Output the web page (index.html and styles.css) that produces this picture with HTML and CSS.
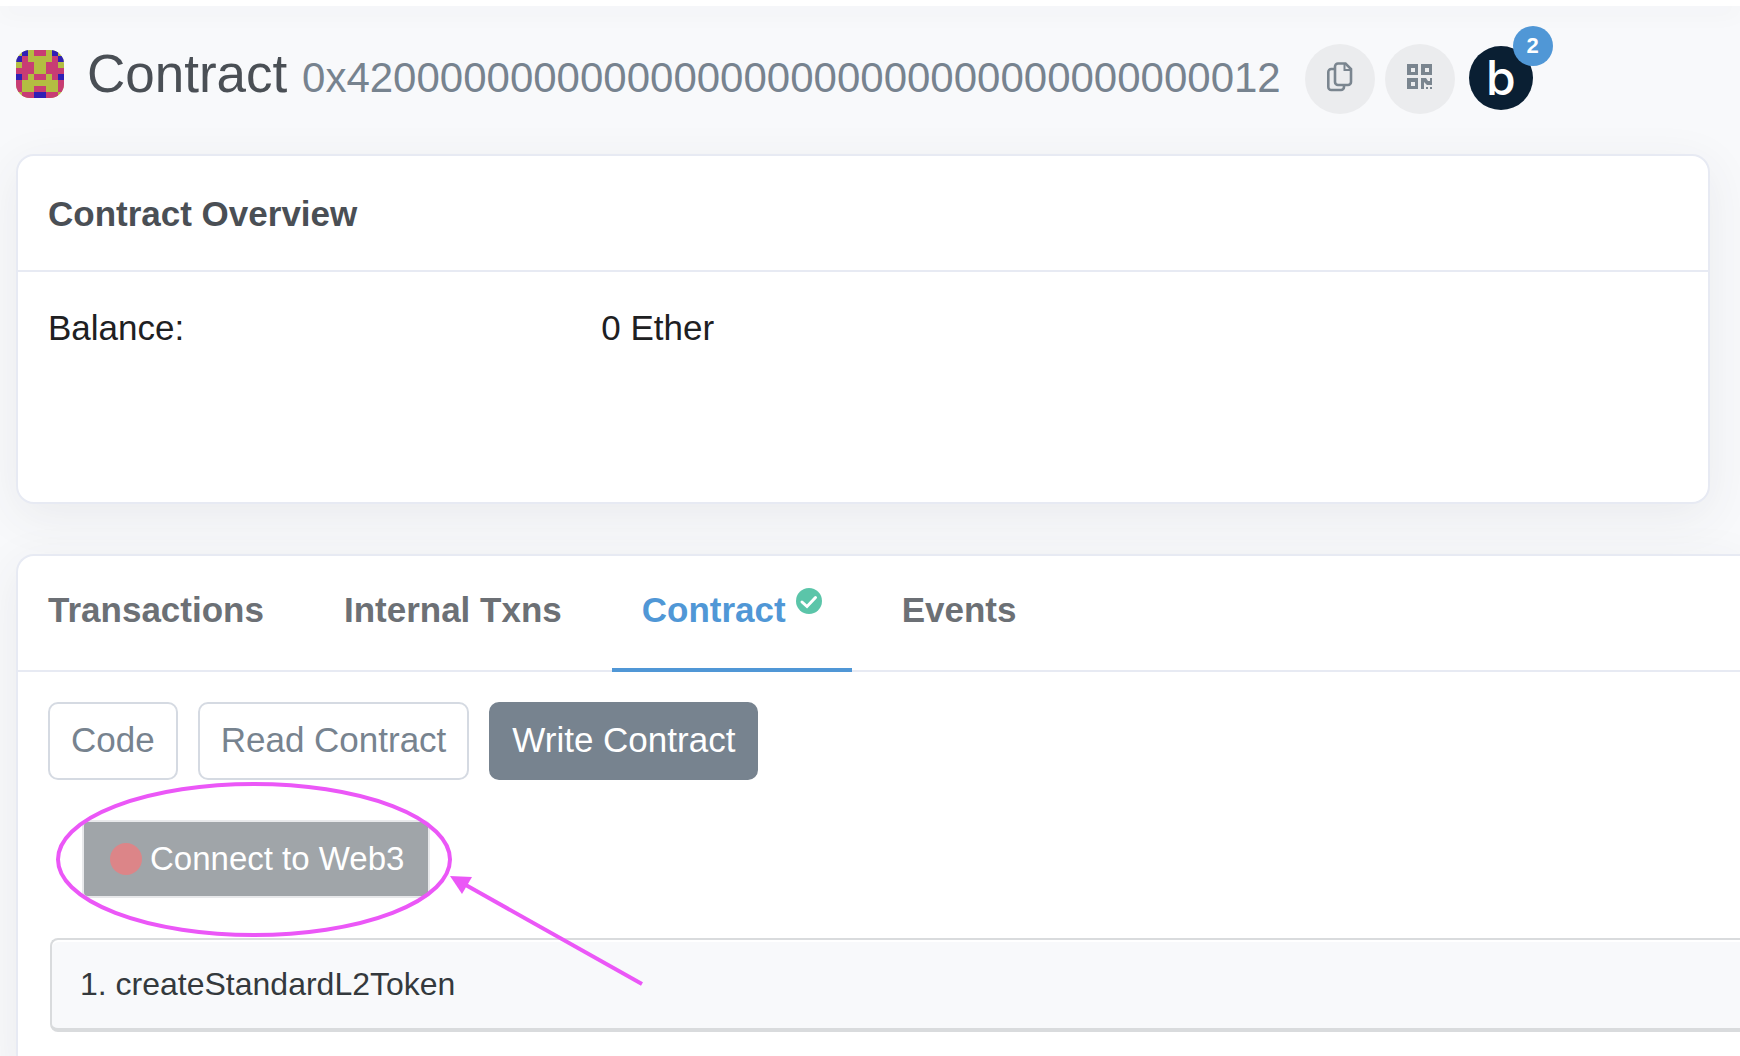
FILE: index.html
```html
<!DOCTYPE html>
<html lang="en">
<head>
<meta charset="utf-8">
<title>Contract</title>
<link rel="stylesheet" href="styles.css">
</head>
<body>
<div class="topbar"></div>
<main class="page">
  <header class="title">
    <svg class="identicon" viewBox="0 0 8 8" shape-rendering="crispEdges" aria-hidden="true">
      <rect width="8" height="8" fill="#b3bd42"/>
      <path fill="#c83c74" d="M3 0h2v1H3zM1 1h1v1H1zM6 1h1v1H6zM1 2h2v1H1zM5 2h2v1H5zM0 3h3v1H0zM5 3h3v1H5zM1 4h1v1H1zM3 4h2v1H3zM6 4h1v1H6zM0 5h1v2H0zM7 5h1v2H7zM3 6h2v1H3zM1 7h6v1H1z"/>
      <path fill="#2f1fb5" d="M1 0h1v1H1zM6 0h1v1H6zM0 1h1v1H0zM7 1h1v1H7zM0 4h1v1H0zM7 4h1v1H7zM3 7h2v1H3z"/>
    </svg>
    <h1 class="heading">Contract <span class="address">0x4200000000000000000000000000000000000012</span></h1>
    <div class="actions">
      <button class="round" type="button" aria-label="Copy address">
        <svg width="26" height="30" viewBox="0 0 26 30" fill="none" stroke="#7a858f" stroke-width="2.6">
          <path d="M8 7H4.300a3 3 0 0 0-3 3v15a3 3 0 0 0 3 3H14a3 3 0 0 0 3-3v-2"/>
          <path d="M11 1.500h7.500l5.500 5.500V20a3 3 0 0 1-3 3H11a3 3 0 0 1-3-3V4.500a3 3 0 0 1 3-3z"/>
          <path d="M17.500 1.500V8H24" stroke-width="2"/>
        </svg>
      </button>
      <button class="round" type="button" aria-label="Show QR code">
        <svg width="26" height="26" viewBox="0 0 26 26" fill="#7a858f">
          <path fill-rule="evenodd" d="M0 0h11v11H0zM4 4v4h4V4zM14 0h11v11H14zM18 4v4h4V4zM0 14h11v11H0zM4 18v4h4v-4z"/>
          <path d="M14 14h5l2 3h2v-3h2v7h-5l-3-3v7h-3zM19 23h2v2h-2zM23 23h2v2h-2z"/>
        </svg>
      </button>
      <a class="logo" href="#" aria-label="Blockscan, 2 messages"><span class="logo-letter">b</span><span class="badge">2</span></a>
    </div>
  </header>

  <section class="card overview">
    <h2 class="card-title">Contract Overview</h2>
    <dl class="facts"><dt>Balance:</dt><dd>0 Ether</dd></dl>
  </section>

  <section class="card panel">
    <nav class="tabs">
      <a class="tab" href="#">Transactions</a>
      <a class="tab" href="#">Internal Txns</a>
      <a class="tab active" href="#">Contract
        <svg class="check" width="26" height="26" viewBox="0 0 26 26" aria-hidden="true"><circle cx="13" cy="13" r="13" fill="#5bc5a9"/><path d="M6 14l5 4.500 8.500-9" fill="none" stroke="#fff" stroke-width="3" stroke-linecap="round"/></svg>
      </a>
      <a class="tab" href="#">Events</a>
    </nav>
    <div class="panel-body">
      <div class="modes">
        <button class="mode" type="button">Code</button>
        <button class="mode" type="button">Read Contract</button>
        <button class="mode selected" type="button">Write Contract</button>
      </div>
      <button class="connect" type="button"><span class="dot"></span>Connect to Web3</button>
      <button class="method" type="button">1. createStandardL2Token</button>
      <svg class="callout" width="640" height="320" viewBox="0 0 640 320" aria-hidden="true">
        <ellipse cx="236" cy="187.500" rx="196" ry="75.500" fill="none" stroke="#eb57f7" stroke-width="4"/>
        <path d="M446 212L624 312" stroke="#eb57f7" stroke-width="4"/>
        <path d="M432 204l22 1-10 17z" fill="#eb57f7"/>
      </svg>
    </div>
  </section>
</main>
</body>
</html>
```
FILE: styles.css
```css
* { box-sizing: border-box; }

body {
  margin: 0;
  min-height: 100vh;
  overflow: hidden;
  background: #f8f9fb;
  color: #1e2022;
  font-family: "Liberation Sans", Arial, sans-serif;
  font-size: 35px;
  line-height: 40px;
}

button { font: inherit; cursor: pointer; }
a { color: inherit; text-decoration: none; }

.topbar {
  height: 6px;
  background: #fff;
  box-shadow: 0 4px 24px rgba(60, 65, 75, 0.08);
}

.page { padding: 38px 0 0 16px; }

.title {
  display: flex;
  align-items: center;
  height: 70px;
}

.identicon {
  width: 48px;
  height: 48px;
  margin-right: 23px;
  margin-bottom: 10px;
  border-radius: 14px;
}

.heading {
  margin: 0 24px 6px 0;
  color: #4a4f55;
  font-size: 53px;
  font-weight: 400;
  line-height: 60px;
  white-space: nowrap;
}

.address { color: #77838f; font-size: 42px; }

.actions { display: flex; align-items: center; gap: 10px; }

.round {
  display: flex;
  align-items: center;
  justify-content: center;
  width: 70px;
  height: 70px;
  padding: 0 0 4px;
  border: 0;
  border-radius: 50%;
  background: #ebecee;
}

.logo {
  position: relative;
  display: flex;
  align-items: center;
  justify-content: center;
  width: 64px;
  height: 64px;
  margin: 0 0 2px 4px;
  border-radius: 50%;
  background: #0a1f33;
}

.logo-letter {
  color: #fff;
  font-family: Inter, "Liberation Sans", sans-serif;
  font-size: 48px;
  font-weight: 500;
}

.badge {
  position: absolute;
  top: -20px;
  right: -20px;
  width: 40px;
  height: 40px;
  border-radius: 50%;
  background: #5097d6;
  color: #fff;
  font-size: 22px;
  font-weight: 700;
  text-align: center;
}

.card {
  border: 2px solid #e7eaf3;
  border-radius: 18px;
  background: #fff;
  box-shadow: 0 12px 48px rgba(60, 65, 80, 0.08);
}

.overview {
  min-height: 350px;
  margin: 40px 30px 50px 0;
}

.card-title {
  margin: 0;
  padding: 38px 30px 36px;
  border-bottom: 2px solid #e7eaf3;
  color: #4a4f55;
  font-size: 35px;
  line-height: 40px;
}

.facts {
  display: grid;
  grid-template-columns: 1fr 2fr;
  margin: 0;
  padding: 36px 0 0 30px;
}

.facts dd { margin: 0; }

.panel {
  border-right: 0;
  border-radius: 18px 0 0 0;
}

.tabs {
  display: flex;
  gap: 20px;
  border-bottom: 2px solid #e7eaf3;
}

.tab {
  display: flex;
  gap: 10px;
  margin-bottom: -2px;
  padding: 34px 30px 38px;
  border-bottom: 4px solid transparent;
  color: #6c7075;
  font-weight: 700;
}

.tab.active { border-color: #5097d6; color: #5097d6; }

.check { margin-top: -2px; }

.panel-body {
  position: relative;
  display: flex;
  flex-direction: column;
  align-items: flex-start;
  padding: 30px 0 40px 30px;
}

.modes { display: flex; gap: 20px; }

.mode {
  height: 78px;
  padding: 0 21px 2px;
  border: 2px solid #d5dae2;
  border-radius: 10px;
  background: #fff;
  color: #77838f;
}

.mode.selected {
  border-color: #77838f;
  background: #77838f;
  color: #fff;
}

.connect {
  display: flex;
  align-items: center;
  gap: 8px;
  height: 78px;
  margin: 40px 0 40px 34px;
  padding: 0 24px 0 26px;
  border: 2px solid #e8e9eb;
  border-radius: 6px;
  background: #a0a5a9;
  color: #fff;
  font-size: 33px;
}

.dot {
  width: 32px;
  height: 32px;
  border-radius: 50%;
  background: #dc8588;
}

.method {
  align-self: stretch;
  height: 94px;
  margin-left: 2px;
  padding: 0 28px;
  border: 2px solid #d9dbdd;
  border-right: 0;
  border-bottom-width: 4px;
  border-radius: 8px 0 0 8px;
  background: #f8f9fb;
  box-shadow: inset 0 2px #fff;
  color: #34393d;
  font-size: 32px;
  text-align: left;
}

.callout {
  position: absolute;
  top: 0;
  left: 0;
  pointer-events: none;
}
```
